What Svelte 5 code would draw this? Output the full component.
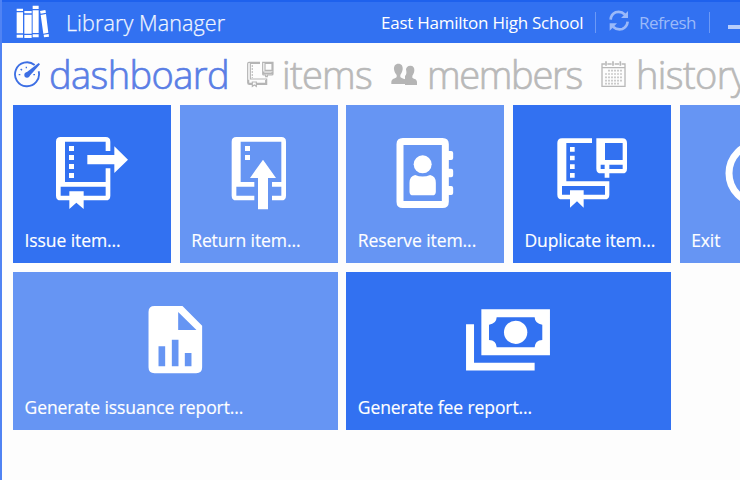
<script>
  const tabs = [
    { id: 'dashboard', label: 'dashboard', spacing: -0.6, active: true },
    { id: 'items', label: 'items', spacing: -0.7 },
    { id: 'members', label: 'members', spacing: -1.3 },
    { id: 'history', label: 'history', spacing: -0.6 }
  ];
  const tiles = [
    { id: 'issue', label: 'Issue item...', box: '9 15 474 330', dark: true },
    { id: 'return', label: 'Return item...', box: '15 15 474 330' },
    { id: 'reserve', label: 'Reserve item...', box: '4.5 15 474 330' },
    { id: 'duplicate', label: 'Duplicate item...', box: '9 15 474 330', dark: true },
    { id: 'exit', label: 'Exit', box: '510 15 474 330' },
    { id: 'issuance', label: 'Generate issuance report...', box: '-261 -54 975 330', wide: true },
    { id: 'fee', label: 'Generate fee report...', box: '-280.5 -54 975 330', wide: true, dark: true }
  ];
</script>

{#snippet tile(t)}
  <button class="tile" class:wide={t.wide} class:dark={t.dark}>
    <svg class="art" viewBox={t.box} fill="#fff">
      {#if t.id === 'issue'}
        <path fill-rule="evenodd" d="M152 111H287Q301 111 301 125V153H287V125H165V246H287V205H301V287Q301 301 287 301H221V327L199 308L178 327V301H152Q138 301 138 287V125Q138 111 152 111ZM152 260V287H178V274H221V287H287V260Z" />
        <path d="M177 138h15v15h-15zM177 165h15v15h-15zM177 192h15v15h-15zM177 219h15v15h-15zM232 165H313V139L354 179L313 219V193H232Z" />
      {:else if t.id === 'return'}
        <path fill-rule="evenodd" d="M184 111H319Q333 111 333 125V287Q333 301 319 301H291V287H319V260H291V246H319V125H197V246H238V260H184V287H238V301H184Q170 301 170 287V125Q170 111 184 111Z" />
        <path d="M210 138h15v15h-15zM210 165h15v15h-15zM264 179L303 234H279V328H249V234H225Z" />
      {:else if t.id === 'reserve'}
        <path fill-rule="evenodd" d="M175 114H294Q313 114 313 133V153H320Q326 153 326 159V174Q326 180 320 180H313V206H320Q326 206 326 212V226Q326 232 320 232H313V258H320Q326 258 326 264V279Q326 285 320 285H313V305Q313 324 294 324H175Q156 324 156 305V133Q156 114 175 114ZM177 135V303H292V135Z" />
        <circle cx="234.500" cy="193" r="27" />
        <path d="M212 225Q234 234 257 225Q274 229 274 248V275Q274 286 263 286H206Q195 286 195 275V248Q195 229 212 225Z" />
      {:else if t.id === 'duplicate'}
        <path fill-rule="evenodd" d="M156 115H246V129H169V244H298V284Q298 298 284 298H221V323L201 304L180 323V298H156Q142 298 142 284V129Q142 115 156 115ZM156 258V284H180V271H221V284H285V258Z" />
        <path d="M180 141h14v14h-14zM180 167h14v14h-14zM180 193h14v14h-14zM180 219h14v14h-14z" />
        <path fill-rule="evenodd" d="M259 115H337Q351 115 351 129V206Q351 220 337 220H298V233H284V220H273Q259 220 259 206ZM285 129V180H338V129ZM272 194V207H284V194ZM298 194V207H338V194Z" />
      {:else if t.id === 'exit'}
        <circle cx="747" cy="220" r="90" fill="none" stroke="#fff" stroke-width="21" />
        <path d="M736 155h22v70h-22z" />
      {:else if t.id === 'issuance'}
        <path fill-rule="evenodd" d="M164 48H248L307 107V232Q307 250 289 250H164Q146 250 146 232V66Q146 48 164 48ZM235 66V120H290ZM176 169V229H196V169ZM216 149V229H236V149ZM255 189V229H275V189Z" />
      {:else if t.id === 'fee'}
        <path fill-rule="evenodd" d="M126 58H332V196H126ZM172 82Q171 102 149 104V150Q171 151 172 172H286Q287 151 309 150V104Q287 102 286 82Z" />
        <circle cx="229" cy="127" r="35" />
        <path d="M80 103H104V218H286V242H80Z" />
      {/if}
    </svg>
    <span class="caption">{t.label}</span>
  </button>
{/snippet}

<div class="window">
  <header>
    <svg class="logo" width="34" height="34" viewBox="48 14 102 102" fill="#fff">
      <path d="M50 25h19v7H50zM50 36h19v63H50zM50 103h19v9H50zM73 32h22v7H73zM73 43h22v57H73zM73 104h22v9H73zM98 16h18v10H98zM98 30h18v68H98zM98 102h18v9H98zM120 32l16-3 2 8-16 3zM122 44l16-3 7 56-15 3zM131 103l15-2 1 8-15 2z" />
    </svg>
    <h1>Library Manager</h1>
    <span class="school">East Hamilton High School</span>
    <i class="rule"></i>
    <button class="refresh">
      <svg width="22" height="22" viewBox="744 29 66 66" fill="none" stroke="#9bb9f9" stroke-width="8">
        <path d="M752 58Q753 42 767 36Q783 31 795 43M803 64Q801 80 787 86Q771 90 759 79" />
        <path d="M804 32V53H783ZM749 91V69H771Z" fill="#9bb9f9" stroke="none" />
      </svg>
      <span>Refresh</span>
    </button>
    <i class="rule"></i>
    <i class="minimize"></i>
  </header>

  <nav>
    {#each tabs as tab}
      <button class="tab {tab.id}" class:active={tab.active}>
        {#if tab.id === 'dashboard'}
          <svg width="28" height="28" viewBox="40 185 84 84" fill="none" stroke="#3d6fe4" stroke-width="5.500">
            <path d="M105 197A36 36 0 1 0 117 216" />
            <path d="M77 222L117 191L121 195L89 231Z" fill="#3d6fe4" stroke="none" />
            <circle cx="82" cy="227" r="8" fill="#3d6fe4" stroke="none" />
            <path d="M57 226h5M63 209l4 4M80 202v5M101 226h5" stroke-width="4" />
          </svg>
        {:else if tab.id === 'items'}
          <svg width="28" height="28" viewBox="48 34 84 84" fill="none" stroke="#b5b5b5" stroke-width="3.500">
            <path d="M90 38H57Q53 38 53 42V99Q53 104 58 104H67V110L73 106L79 110V104H110V88H61V41H90M56 90V101H67V97H79V101H107V91" />
            <path d="M98 38H129V73Q129 76 126 76H112V81H107V76H101Q98 76 98 73ZM105 41H126V62H105ZM101 67H126V72H101Z" />
            <path d="M67 47V85" stroke-width="4" stroke-dasharray="4 5" />
          </svg>
        {:else if tab.id === 'members'}
          <svg width="28" height="26" viewBox="482 38 84 78" fill="#b5b5b5">
            <path d="M540 49C549 49 553 55 552 64C551 71 548 76 546 79V85C552 90 560 88 560 99V107H524V79C529 77 529 67 527 61C527 54 532 49 540 49Z" />
            <path d="M504 43C514 43 518 50 517 60C516 68 513 73 510 77V83C517 90 530 87 531 98V104H483V98C484 87 494 89 499 83V77C495 73 492 68 491 60C490 50 495 43 504 43Z" />
          </svg>
        {:else}
          <svg width="28" height="28" viewBox="181 33 84 84" fill="none" stroke="#b8b8b8" stroke-width="4">
            <path d="M196 42H187V109H256V42H246M203 42H216M225 42H238M187 53H256" />
            <path d="M199 34V47M220 34V47M242 34V47" stroke-width="5" />
            <path d="M205 62H250M196 72H250M196 82H250M196 92H250M196 101H238" stroke="#cacaca" stroke-width="5" stroke-dasharray="6 3" />
          </svg>
        {/if}
        <span style:letter-spacing="{tab.spacing}px">{tab.label}</span>
      </button>
    {/each}
  </nav>

  <main>
    <div class="row">{#each tiles.slice(0, 5) as t}{@render tile(t)}{/each}</div>
    <div class="row">{#each tiles.slice(5) as t}{@render tile(t)}{/each}</div>
  </main>
</div>

<style>
  :global(body) { margin: 0; background: #fdfdfd; }
  .window {
    box-sizing: border-box;
    width: 740px;
    height: 480px;
    overflow: hidden;
    background: #fdfdfd;
    border-left: 2px solid #5083f3;
    font-family: "Open Sans", "Noto Sans", sans-serif;
  }
  button { border: 0; padding: 0; margin: 0; background: none; font: inherit; text-align: left; }
  header {
    display: flex;
    align-items: center;
    height: 43px;
    margin-left: -2px;
    padding-left: 2px;
    box-sizing: border-box;
    border-top: 2px solid #1e61ed;
    background: #3271f1;
    color: #fff;
    white-space: nowrap;
  }
  header > * { flex: none; }
  .logo { margin: -1px 0 0 14px; }
  h1 { margin: 0 0 1px 16px; width: 315px; font-size: 21.5px; font-weight: 300; color: #f0f5ff; letter-spacing: 0.1px; -webkit-text-stroke: 0.25px; }
  .school { width: 214px; font-size: 17px; letter-spacing: -0.25px; }
  .rule { width: 1px; height: 21px; background: #6c99f6; }
  .refresh { display: flex; align-items: center; margin-left: 12px; width: 101px; color: #9bb9f9; font-size: 17px; letter-spacing: -0.55px; }
  .refresh svg { margin: -3px 9px 0 0; }
  .minimize { width: 20px; height: 4px; margin: 8px 0 0 18px; background: #b8cdfb; }
  nav { display: flex; height: 62px; }
  .tab { display: flex; flex: none; align-items: center; color: #b9b9b9; font-size: 38px; font-weight: 300; line-height: 60px; white-space: nowrap; }
  .tab svg { flex: none; margin-top: 2px; }
  .tab span { margin: -1px 0 0 8px; -webkit-text-stroke: 0.7px; }
  .active { color: #5a7ee5; }
  .dashboard { margin-left: 11px; width: 233px; }
  .items { width: 145px; }
  .members { width: 209px; }
  main { display: flex; flex-direction: column; gap: 9px; padding-left: 11px; }
  .row { display: flex; gap: 8.670px; }
  .tile { flex: none; width: 158px; height: 158px; background: #6695f3; color: #fff; display: flex; flex-direction: column; }
  .wide { width: 324.670px; }
  .dark { background: #3271f1; }
  .art { flex: none; width: 100%; height: 110px; }
  .caption { margin: 13px 0 0 11.500px; font-size: 17.500px; line-height: 24px; letter-spacing: -0.080px; white-space: nowrap; -webkit-text-stroke: 0.150px; }
</style>
